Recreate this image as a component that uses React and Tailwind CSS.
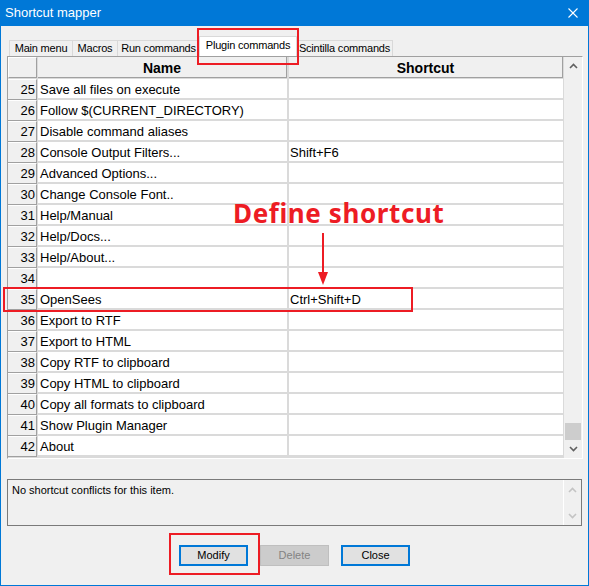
import React from "react";

const rows = [
  [25, "Save all files on execute", ""],
  [26, "Follow $(CURRENT_DIRECTORY)", ""],
  [27, "Disable command aliases", ""],
  [28, "Console Output Filters...", "Shift+F6"],
  [29, "Advanced Options...", ""],
  [30, "Change Console Font..", ""],
  [31, "Help/Manual", ""],
  [32, "Help/Docs...", ""],
  [33, "Help/About...", ""],
  [34, "", ""],
  [35, "OpenSees", "Ctrl+Shift+D"],
  [36, "Export to RTF", ""],
  [37, "Export to HTML", ""],
  [38, "Copy RTF to clipboard", ""],
  [39, "Copy HTML to clipboard", ""],
  [40, "Copy all formats to clipboard", ""],
  [41, "Show Plugin Manager", ""],
  [42, "About", ""],
];

function Chevron({ up, color }) {
  return (
    <svg width="9" height="6" viewBox="0 0 9 6">
      <polyline
        points={up ? "1,5 4.5,1.5 8,5" : "1,1 4.5,4.5 8,1"}
        fill="none"
        stroke={color}
        strokeWidth="1.6"
      />
    </svg>
  );
}

export default function App() {
  return (
    <div className="relative w-[589px] h-[586px] overflow-hidden bg-[#f0f0f0] flex flex-col font-['Liberation_Sans',Arial,sans-serif] text-black">
      {/* Title bar */}
      <div className="h-[26px] bg-[#0078d7] flex items-center justify-between pl-[5px] pr-[11px] text-white text-[13px] shrink-0">
        <span className="leading-[16px]">Shortcut mapper</span>
        <svg width="10" height="10" viewBox="0 0 10 10">
          <line x1="0.5" y1="0.5" x2="9.5" y2="9.5" stroke="white" strokeWidth="1.1" />
          <line x1="9.5" y1="0.5" x2="0.5" y2="9.5" stroke="white" strokeWidth="1.1" />
        </svg>
      </div>

      {/* Body */}
      <div className="flex-1 border-x border-b border-[#0078d7] flex flex-col pt-[10px]">
        {/* Tabs */}
        <div className="ml-[8px] flex items-end h-[20px] text-[11px] tracking-[-0.2px]">
          <div className="w-[63px] h-[16px] border-l border-t border-[#d9d9d9] text-center leading-[15px]">Main menu</div>
          <div className="w-[45px] h-[16px] border-l border-t border-[#d9d9d9] text-center leading-[15px]">Macros</div>
          <div className="w-[82px] h-[16px] border-l border-t border-[#d9d9d9] text-center leading-[15px]">Run commands</div>
          <div className="w-[98px] h-[20px] border-l border-t border-r border-[#d9d9d9] bg-white text-center leading-[17px]">Plugin commands</div>
          <div className="w-[96px] h-[16px] border-t border-r border-[#d9d9d9] text-center leading-[15px]">Scintilla commands</div>
        </div>

        {/* Grid panel */}
        <div className="ml-[6px] w-[576px] h-[403px] border border-[#a0a0a0] border-r-white border-b-white flex">
          <div className="w-[556px] flex flex-col bg-[#dadada] h-[401px]">
            {/* header */}
            <div className="flex h-[22px] shrink-0">
              <div className="w-[29px] h-[21px] bg-[#f0f0f0] border-t border-l border-white border-r border-b border-r-[#a0a0a0] border-b-[#a0a0a0]" />
              <div className="ml-[1px] w-[249px] h-[21px] bg-[#f0f0f0] border-r border-b border-[#a0a0a0] text-center font-bold text-[14px] leading-[22px]">Name</div>
              <div className="ml-[2px] w-[274px] h-[21px] bg-[#f0f0f0] border-r border-b border-[#a0a0a0] text-center font-bold text-[14px] leading-[22px]">Shortcut</div>
            </div>
            {rows.map(([n, name, sc]) => (
              <div key={n} className="flex h-[21px] shrink-0 text-[13px]">
                <div className="w-[29px] h-[21px] bg-[#f0f0f0] border-t border-white border-r border-b border-r-[#a0a0a0] border-b-[#a0a0a0] text-right pr-[1px] leading-[19px]">{n}</div>
                <div className="ml-[1px] w-[249px] h-[19px] bg-white pl-[2px] leading-[21px] whitespace-nowrap">{name}</div>
                <div className="ml-[2px] w-[274px] h-[19px] bg-white pl-[1px] leading-[21px] whitespace-nowrap">{sc}</div>
              </div>
            ))}
          </div>
          {/* scrollbar */}
          <div className="w-[18px] h-[401px] bg-[#f0f0f0] flex flex-col pl-[1px]">
            <div className="h-[17px] flex items-center justify-center shrink-0">
              <Chevron up color="#606060" />
            </div>
            <div className="h-[349px] shrink-0" />
            <div className="h-[17px] w-[16px] bg-[#cdcdcd] shrink-0" />
            <div className="h-[17px] flex items-center justify-center shrink-0">
              <Chevron color="#606060" />
            </div>
          </div>
        </div>

        {/* Conflict text box */}
        <div className="mt-[20px] ml-[6px] w-[575px] h-[47px] border border-[#7a7a7a] flex bg-[#f0f0f0]">
          <div className="w-[555px] pl-[4px] pt-[3px] text-[11px] leading-[14px]">No shortcut conflicts for this item.</div>
          <div className="w-[18px] border-l border-white flex flex-col items-center justify-between pt-[7px] pb-[6px]">
            <Chevron up color="#c4c4c4" />
            <Chevron color="#c4c4c4" />
          </div>
        </div>

        {/* Buttons */}
        <div className="mt-[19px] ml-[178px] flex gap-[12px] text-[11px]">
          <div className="w-[69px] h-[21px] bg-[#e1e1e1] border-2 border-[#0078d7] flex items-center justify-center">Modify</div>
          <div className="w-[69px] h-[21px] bg-[#cccccc] border border-[#bfbfbf] text-[#838383] flex items-center justify-center">Delete</div>
          <div className="w-[69px] h-[21px] bg-[#e1e1e1] border-2 border-[#0078d7] flex items-center justify-center">Close</div>
        </div>
      </div>

      {/* Annotations */}
      <div className="absolute left-[197px] top-[28px] w-[102px] h-[37px] border-2 border-[#ed1c24]" />
      <div className="absolute left-[3px] top-[287px] w-[410px] h-[25px] border-2 border-[#ed1c24]" />
      <div className="absolute left-[169px] top-[533px] w-[91px] h-[42px] border-2 border-[#ed1c24]" />
      <div className="absolute left-[233px] top-[200px] font-['Noto_Sans',sans-serif] font-bold text-[26px] leading-[26px] tracking-[0.6px] text-[#ed1c24] whitespace-nowrap">
        Define shortcut
      </div>
      <svg className="absolute left-[316px] top-[232px]" width="14" height="54" viewBox="0 0 14 54">
        <line x1="7" y1="1" x2="7" y2="42" stroke="#ed1c24" strokeWidth="2" />
        <polygon points="2,40 12,40 7,53" fill="#ed1c24" />
      </svg>
    </div>
  );
}
